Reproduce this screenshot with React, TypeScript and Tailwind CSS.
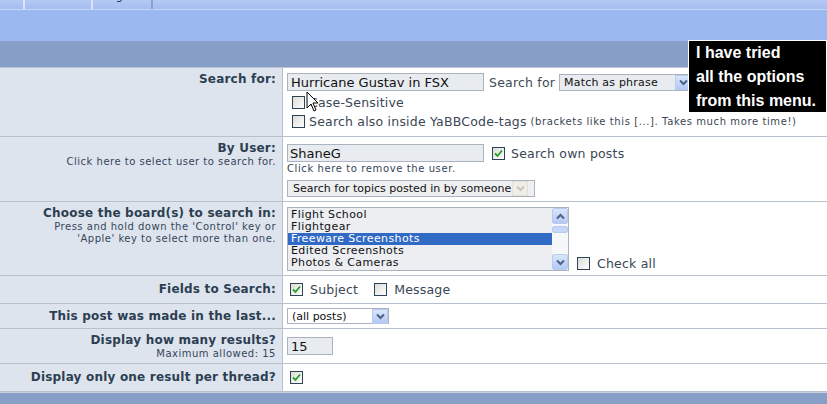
import type { ReactNode } from 'react'

const font = { fontFamily: '"DejaVu Sans", Verdana, sans-serif' }

function Check({ checked = false, className = '' }: { checked?: boolean; className?: string }) {
  return (
    <span className={`flex h-[13px] w-[13px] shrink-0 items-center justify-center border border-[#2f4356] bg-gradient-to-br from-[#dcdcd6] to-white ${className}`}>
      {checked && (
        <svg width="9" height="9" viewBox="0 0 9 9">
          <path d="M1 4.5 3.5 7 8 1.5" fill="none" stroke="#21a121" strokeWidth="1.8" />
        </svg>
      )}
    </span>
  )
}

function Arrow({ disabled = false, className = '' }: { disabled?: boolean; className?: string }) {
  return (
    <span
      className={`flex h-[15px] w-[16px] items-center justify-center border ${
        disabled ? 'border-[#e4e2d8] bg-[#efeee8]' : 'border-[#b8cbef] bg-gradient-to-b from-[#dbe6fb] to-[#b3c8f3]'
      } ${className}`}
    >
      <svg width="9" height="7" viewBox="0 0 9 7">
        <path d="M1 1.5 4.5 5 8 1.5" fill="none" stroke={disabled ? '#c9c7bb' : '#4d6185'} strokeWidth="2" />
      </svg>
    </span>
  )
}

function Row({ h, label, sub, children, center = false }: { h: string; label: string; sub?: ReactNode; children: ReactNode; center?: boolean }) {
  return (
    <div className={`grid grid-cols-[283px_1fr] border-b border-[#b7c1cc] ${h}`}>
      <div className={`flex flex-col items-end border-r border-[#b7c1cc] bg-[#dee4ed] pr-[6px] text-right ${center ? 'justify-center' : 'pt-[4px]'}`}>
        <div className="text-[12px] font-bold leading-[15px] text-[#2c3f52]">{label}</div>
        {sub && <div className="text-[10px] leading-[12px] tracking-[0.5px] text-[#34465a]">{sub}</div>}
      </div>
      <div className={`flex flex-col bg-white pl-[4px] ${center ? 'justify-center' : 'pt-[5px]'}`}>{children}</div>
    </div>
  )
}

export default function App() {
  const boards = ['Flight Simulator X', 'Flight School', 'Flightgear', 'Freeware Screenshots', 'Edited Screenshots', 'Photos & Cameras']

  return (
    <div className="relative h-[404px] w-[827px] overflow-hidden bg-white text-[12.5px] leading-[15px] tracking-[0.2px] text-[#3a4654]" style={font}>
      {/* tab strip, cut off at the top */}
      <div className="flex h-[10px] border-b border-[#c6d6f7] bg-gradient-to-b from-[#b4c9f5] to-[#a5bdf1] text-[11px] leading-[13px] text-[#202a3a]">
        <div className="w-[25px] overflow-hidden border-r-2 border-[#dbe5fa]">
          <div className="mt-[-10px] pl-[2px]">in</div>
        </div>
        <div className="w-[68px] overflow-hidden border-r-2 border-[#dbe5fa] text-center">
          <div className="mt-[-10px]">User CP</div>
        </div>
        <div className="w-[60px] overflow-hidden border-r-2 border-[#8da2c8] text-center">
          <div className="mt-[-10px]">Logout</div>
        </div>
      </div>
      <div className="h-[31px] bg-[#9bb8f0]" />
      <div className="h-[27px] border-b border-[#b9c6da] bg-[#879fc7]" />

      <Row h="h-[69px]" label="Search for:">
        <div className="flex items-center">
          <div className="flex h-[18px] w-[197px] items-center border border-[#aab4be] bg-[#e8ebef] pl-[3px] text-[13px] tracking-normal text-[#111]">Hurricane Gustav in FSX</div>
          <span className="ml-[5px] text-[#3d4a57]">Search for</span>
          <div className="ml-[4px] flex h-[17px] w-[133px] items-center justify-between border border-[#aab4be] bg-[#e8ebef] pl-[4px] text-[11px] text-[#111]">
            Match as phrase
            <Arrow />
          </div>
        </div>
        <div className="mt-[4px] flex items-center gap-[4px] pl-[5px]">
          <Check />
          <span>Case-Sensitive</span>
        </div>
        <div className="mt-[4px] flex items-center gap-[4px] pl-[5px]">
          <Check />
          <span>Search also inside YaBBCode-tags</span>
          <span className="text-[10px] tracking-[0.6px]">(brackets like this [...]. Takes much more time!)</span>
        </div>
      </Row>

      <Row h="h-[65px]" label="By User:" sub="Click here to select user to search for.">
        <div className="mt-[2px] flex h-[18px] items-center">
          <div className="flex h-[18px] w-[197px] items-center border border-[#aab4be] bg-[#e8ebef] pl-[2px] text-[13px] tracking-normal text-[#111]">ShaneG</div>
          <Check checked className="ml-[8px]" />
          <span className="ml-[6px]">Search own posts</span>
        </div>
        <div className="text-[10px] leading-[14px] tracking-[0.6px] text-[#34465a]">Click here to remove the user.</div>
        <div className="mt-[4px] flex h-[17px] w-[248px] items-center justify-between border border-[#aab4be] bg-[#eeeff1] pl-[5px] text-[11px] tracking-normal text-[#111]">
          Search for topics posted in by someone
          <Arrow disabled className="mr-[6px]" />
        </div>
      </Row>

      <Row
        h="h-[74px]"
        label="Choose the board(s) to search in:"
        sub={<>Press and hold down the 'Control' key or<br />'Apple' key to select more than one.</>}
      >
        <div className="flex items-end">
          <div className="flex h-[64px] w-[282px] border border-[#aab4be] bg-[#eceef1]">
            <div className="flex-1 overflow-hidden text-[11px] leading-[12px] tracking-[0.4px] text-[#111]">
              <div className="mt-[-11px]">
                {boards.map((b) => (
                  <div key={b} className={b === 'Freeware Screenshots' ? 'bg-[#316ac5] pl-[3px] text-white' : 'pl-[3px]'}>{b}</div>
                ))}
              </div>
            </div>
            <div className="flex w-[16px] flex-col justify-between bg-[#f6f7f9]">
              <div>
                <span className="flex h-[16px] w-[16px] items-center justify-center rounded-[2px] border border-[#b8cbef] bg-gradient-to-b from-[#dbe6fb] to-[#b3c8f3]">
                  <svg width="9" height="7" viewBox="0 0 9 7"><path d="M1 5.5 4.5 2 8 5.5" fill="none" stroke="#4d6185" strokeWidth="2" /></svg>
                </span>
                <span className="mt-[2px] block h-[7px] w-[16px] rounded-[2px] border border-[#b8cbef] bg-[#c7d6f6]" />
              </div>
              <span className="flex h-[16px] w-[16px] items-center justify-center rounded-[2px] border border-[#b8cbef] bg-gradient-to-b from-[#dbe6fb] to-[#b3c8f3]">
                <svg width="9" height="7" viewBox="0 0 9 7"><path d="M1 1.5 4.5 5 8 1.5" fill="none" stroke="#4d6185" strokeWidth="2" /></svg>
              </span>
            </div>
          </div>
          <Check className="mb-[1px] ml-[8px]" />
          <span className="ml-[7px]">Check all</span>
        </div>
      </Row>

      <Row h="h-[28px]" label="Fields to Search:" center>
        <div className="flex items-center">
          <Check checked className="ml-[3px]" />
          <span className="ml-[7px]">Subject</span>
          <Check className="ml-[16px]" />
          <span className="ml-[7px]">Message</span>
        </div>
      </Row>

      <Row h="h-[25px]" label="This post was made in the last..." center>
        <div className="flex h-[16px] w-[102px] items-center justify-between border border-[#aab4be] bg-white pl-[4px] text-[11px] tracking-normal text-[#111]">
          (all posts)
          <Arrow />
        </div>
      </Row>

      <Row h="h-[35px]" label="Display how many results?" sub="Maximum allowed: 15" center>
        <div className="flex h-[18px] w-[46px] items-center border border-[#aab4be] bg-[#e8ebef] pl-[3px] text-[13px] tracking-normal text-[#111]">15</div>
      </Row>

      <Row h="h-[28px]" label="Display only one result per thread?" center>
        <Check checked className="ml-[3px]" />
      </Row>

      <div className="h-[13px] border-t border-[#c9d2de] bg-[#879fc7]" />

      {/* annotation pasted over the page */}
      <div
        className="absolute left-[688px] top-[40px] h-[73px] w-[139px] border border-white bg-black pl-[7px] text-[16px] font-bold leading-[24px] tracking-normal text-white"
        style={{ fontFamily: '"Liberation Sans", Arial, sans-serif' }}
      >
        I have tried<br />all the options<br />from this menu.
      </div>

      {/* mouse pointer */}
      <svg className="absolute left-[306px] top-[91px]" width="13" height="21" viewBox="0 0 13 21">
        <path d="M1 1v16l4-4 3 7 2-1-3-7h5z" fill="white" stroke="black" strokeWidth="1" />
      </svg>
    </div>
  )
}
